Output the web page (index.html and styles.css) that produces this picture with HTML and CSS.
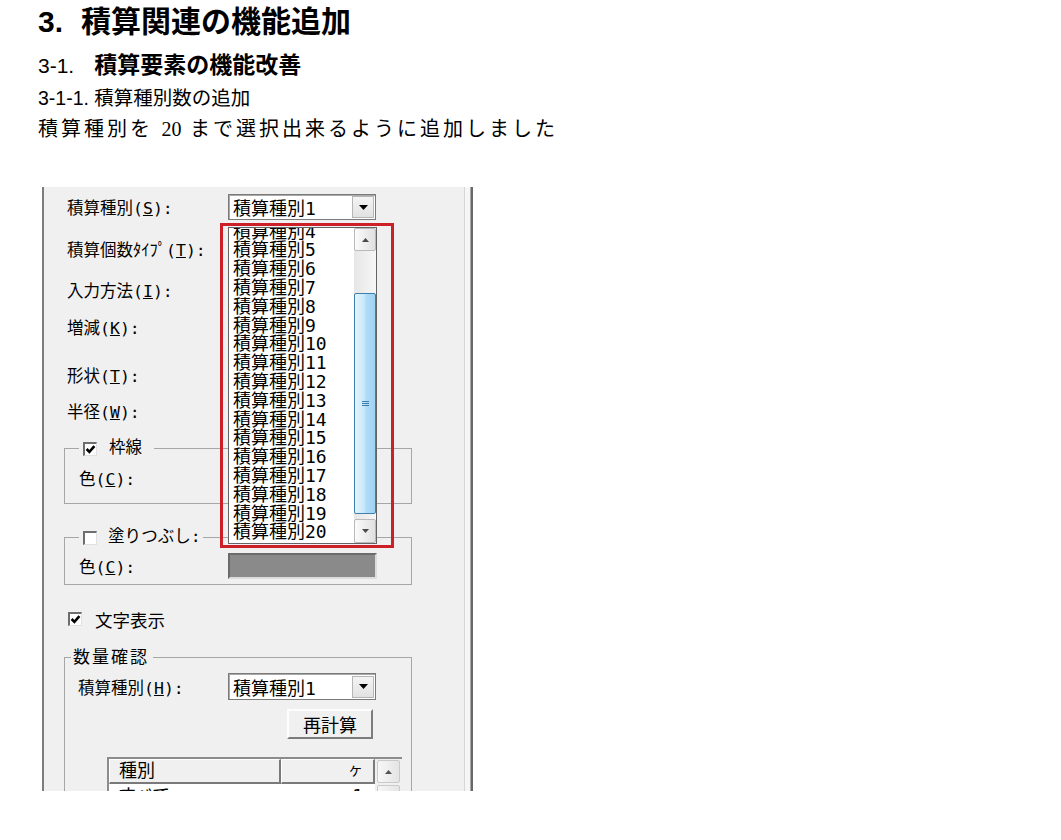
FILE: index.html
```html
<!DOCTYPE html>
<html lang="ja">
<head>
  <meta charset="UTF-8" />
  <title>3. 積算関連の機能追加</title>
  <link rel="stylesheet" href="styles.css">
</head>
<body>

  <div class="doc">
    <h1><span class="num">3.</span>積算関連の機能追加</h1>
    <h2><span class="num">3-1.</span>積算要素の機能改善</h2>
    <h3>3-1-1. 積算種別数の追加</h3>
    <p class="lead">積算種別を <span class="serif">20</span> まで選択出来るように追加しました</p>

    <!-- dialog screenshot -->
    <div class="shot">
      <div class="panel">
        <div class="row r1">
          <span class="lbl">積算種別(<u>S</u>):</span>
          <div class="combo">
            <span class="val">積算種別1</span>
            <i class="drop"><svg width="9" height="5" viewBox="0 0 9 5"><path d="M0 0h9L4.5 5z" fill="#000"/></svg></i>
          </div>
        </div>
        <div class="row r2"><span class="lbl">積算個数ﾀｲﾌﾟ(<u>T</u>):</span></div>
        <div class="row r3"><span class="lbl">入力方法(<u>I</u>):</span></div>
        <div class="row r4"><span class="lbl">増減(<u>K</u>):</span></div>
        <div class="row r5"><span class="lbl">形状(<u>T</u>):</span></div>
        <div class="row r6"><span class="lbl">半径(<u>W</u>):</span></div>

        <fieldset class="grp g1">
          <legend><i class="chk"><svg width="11" height="11" viewBox="0 0 11 11"><path d="M1.6 5l2.8 2.9L9.4 2.2" fill="none" stroke="#000" stroke-width="2.6"/></svg></i>枠線</legend>
          <div class="row"><span class="lbl">色(<u>C</u>):</span><div class="swatch"></div></div>
        </fieldset>

        <fieldset class="grp g2">
          <legend><i class="chk"></i>塗りつぶし:</legend>
          <div class="row"><span class="lbl">色(<u>C</u>):</span><div class="swatch"></div></div>
        </fieldset>

        <div class="row txtchk">
          <i class="chk"><svg width="11" height="11" viewBox="0 0 11 11"><path d="M1.6 5l2.8 2.9L9.4 2.2" fill="none" stroke="#000" stroke-width="2.6"/></svg></i>文字表示
        </div>

        <fieldset class="grp g3">
          <legend>数量確認</legend>
          <div class="row hrow">
            <span class="lbl">積算種別(<u>H</u>):</span>
            <div class="combo">
              <span class="val">積算種別1</span>
              <i class="drop"><svg width="9" height="5" viewBox="0 0 9 5"><path d="M0 0h9L4.5 5z" fill="#000"/></svg></i>
            </div>
          </div>
          <div class="btn">再計算</div>
          <div class="tbl">
            <div class="tbl-main">
              <div class="thead">
                <div class="th th1">種別</div>
                <div class="th th2">ヶ</div>
              </div>
              <div class="trow"><span class="td1">すべて</span><span class="td2">1</span></div>
            </div>
            <div class="tbl-sb">
              <i class="sbtn"><svg width="7" height="4" viewBox="0 0 7 4"><path d="M0 4h7L3.5 0z" fill="#555"/></svg></i>
              <i class="sbtn"></i>
            </div>
          </div>
        </fieldset>
      </div>
      <div class="edge"></div>

      <!-- open dropdown list -->
      <div class="dropdown">
        <div class="items">
          <div>積算種別4</div>
          <div>積算種別5</div>
          <div>積算種別6</div>
          <div>積算種別7</div>
          <div>積算種別8</div>
          <div>積算種別9</div>
          <div>積算種別10</div>
          <div>積算種別11</div>
          <div>積算種別12</div>
          <div>積算種別13</div>
          <div>積算種別14</div>
          <div>積算種別15</div>
          <div>積算種別16</div>
          <div>積算種別17</div>
          <div>積算種別18</div>
          <div>積算種別19</div>
          <div>積算種別20</div>
        </div>
        <div class="sb">
          <i class="arrow up"><svg width="7" height="4" viewBox="0 0 7 4"><path d="M0 4h7L3.5 0z" fill="#4a4a4a"/></svg></i>
          <div class="track">
            <div class="thumb"><svg width="7" height="6" viewBox="0 0 7 6"><path d="M0 .5h7M0 2.5h7M0 4.5h7" stroke="#3d7bad" stroke-width="1"/></svg></div>
          </div>
          <i class="arrow down"><svg width="7" height="4" viewBox="0 0 7 4"><path d="M0 0h7L3.5 4z" fill="#4a4a4a"/></svg></i>
        </div>
      </div>
      <div class="mark"></div>
    </div>
  </div>

</body>
</html>
```

FILE: styles.css
```css
* {
  box-sizing: border-box;
}

body {
  margin: 0;
  background: #fff;
  color: #000;
  font-family: "Liberation Sans", "Noto Sans CJK JP", sans-serif;
}

.doc {
  padding: 6px 0 0 38px;
}

h1 {
  margin: 0;
  font-size: 30px;
  line-height: 32px;
  font-weight: bold;
}

h1 .num {
  margin-right: 18px;
}

h2 {
  margin: 13px 0 0;
  font-size: 23px;
  line-height: 28px;
  font-weight: bold;
}

h2 .num {
  font-size: 21px;
  font-weight: normal;
  margin-right: 20px;
}

h3 {
  margin: 6px 0 0;
  font-size: 19.5px;
  line-height: 24px;
  font-weight: normal;
}

.lead {
  margin: 6px 0 0;
  font-size: 20px;
  line-height: 26px;
  letter-spacing: 3px;
}

.serif {
  font-family: "Liberation Serif", serif;
  letter-spacing: 0;
}

/* dialog */
.shot {
  position: relative;
  display: flex;
  width: 431px;
  height: 604px;
  margin: 45px 0 0 4px;
  border-left: 2px solid #7d7d7d;
  border-right: 2px solid #686868;
  overflow: hidden;
  font-family: "DejaVu Sans Mono", "Noto Sans CJK JP", monospace;
  font-size: 16.5px;
}

.panel {
  width: 421px;
  flex: none;
  background: #f0f0f0;
  border-right: 1px solid #d6d6d6;
  padding-left: 20px;
}

.edge {
  flex: 1;
  background: #f6f6f6;
  border-right: 1px solid #a8a8a8;
}

.row {
  display: flex;
  align-items: center;
  height: 26px;
  padding-left: 3px;
}

.r1 { margin-top: 7px; }
.r2 { margin-top: 16px; }
.r3 { margin-top: 15px; }
.r4 { margin-top: 11px; }
.r5 { margin-top: 22px; }
.r6 { margin-top: 10px; }

.lbl {
  flex: none;
}

.r1 .lbl {
  width: 161px;
}

.combo {
  display: flex;
  align-items: center;
  width: 148px;
  height: 26px;
  background: #fff;
  border: 1px solid #7a7a7a;
  box-shadow: inset 1px 1px 0 #a9a9a9;
  padding: 0 1px 0 4px;
  font-size: 18px;
}

.combo .val {
  flex: 1;
}

.drop {
  display: flex;
  align-items: center;
  justify-content: center;
  width: 22px;
  height: 22px;
  background: linear-gradient(#f4f4f4, #e2e2e2);
  border: 1px solid #b6b6b6;
}

.chk {
  display: inline-block;
  width: 14px;
  height: 14px;
  background: #fff;
  border-style: solid;
  border-width: 2px 1px 1px 2px;
  border-color: #6e6e6e #e0e0e0 #e0e0e0 #6e6e6e;
  vertical-align: middle;
}

.chk svg {
  display: block;
}

/* group boxes */
.grp {
  width: 348px;
  margin: 0;
  padding: 0;
  border: 1px solid #a6a6a6;
  min-inline-size: 0;
}

.grp legend {
  height: 18px;
  line-height: 18px;
  margin-left: 14px;
  font-size: 16.5px;
}

.grp .row {
  padding-left: 14px;
}

.grp .lbl {
  width: 149px;
}

.swatch {
  width: 149px;
  height: 26px;
  background: #8a8a8a;
  border: 2px solid;
  border-color: #6b6b6b #dcdcdc #dcdcdc #6b6b6b;
}

.g1 {
  margin-top: 15px;
  padding-bottom: 12px;
}

.g1 legend {
  padding: 0 12px 0 4px;
}

.g1 legend .chk {
  margin-right: 12px;
}

.g1 .row {
  margin-top: 8px;
}

.g2 {
  margin-top: 24px;
  padding-bottom: 5px;
}

.g2 legend {
  padding: 0 2px 0 4px;
}

.g2 legend .chk {
  margin-right: 11px;
}

.g2 .row {
  margin-top: 7px;
}

.txtchk {
  margin-top: 24px;
  height: 20px;
  padding-left: 4px;
  font-size: 17.5px;
}

.txtchk .chk {
  margin-right: 13px;
}

.g3 {
  margin-top: 19px;
  height: 200px;
}

.g3 legend {
  margin-left: 6px;
  padding: 0 4px 0 2px;
  font-size: 17px;
  letter-spacing: 2px;
}

.g3 .hrow {
  margin-top: 7px;
  height: 27px;
  padding-left: 13px;
}

.g3 .hrow .lbl {
  width: 150px;
}

.g3 .hrow .combo {
  height: 27px;
}

.btn {
  display: flex;
  align-items: center;
  justify-content: center;
  width: 86px;
  height: 30px;
  margin: 9px 0 0 222px;
  background: #f0f0f0;
  border: 2px solid;
  border-color: #fdfdfd #7c7c7c #7c7c7c #fdfdfd;
  font-size: 18px;
}

.tbl {
  display: flex;
  width: 295px;
  height: 60px;
  margin: 18px 0 0 42px;
  background: #fff;
  border-top: 2px solid #8c8c8c;
  border-left: 2px solid #8c8c8c;
}

.tbl-main {
  width: 266px;
}

.thead {
  display: flex;
  height: 25px;
}

.th {
  background: #f0f0f0;
  border-style: solid;
  border-width: 1px 2px 2px 1px;
  border-color: #fff #7a7a7a #7a7a7a #fff;
  font-size: 18px;
  line-height: 21px;
}

.th1 {
  width: 172px;
  padding-left: 9px;
}

.th2 {
  width: 94px;
  padding-right: 10px;
  text-align: right;
  font-size: 15px;
}

.trow {
  display: flex;
  font-size: 18px;
  line-height: 24px;
}

.td1 {
  width: 172px;
  padding-left: 9px;
}

.td2 {
  width: 94px;
  padding-right: 12px;
  text-align: right;
}

.tbl-sb {
  flex: 1;
  padding: 1px 2px;
  background: #f0f0f0;
}

.sbtn {
  display: flex;
  align-items: center;
  justify-content: center;
  height: 23px;
  margin-bottom: 2px;
  border: 1px solid #c9c9c9;
  border-radius: 2px;
  background: linear-gradient(to right, #f7f7f7, #e4e4e4);
}

/* open dropdown list */
.dropdown {
  position: absolute;
  left: 184px;
  top: 40px;
  width: 149px;
  height: 317px;
  display: flex;
  background: #fff;
  border: 1px solid #646464;
  font-size: 18px;
  z-index: 1;
}

.items {
  flex: 1;
  padding-left: 4px;
  overflow: hidden;
}

.items div {
  height: 18.8px;
  line-height: 18.8px;
  white-space: nowrap;
}

.items div:first-child {
  margin-top: -5.4px;
}

.sb {
  display: flex;
  flex-direction: column;
  width: 22px;
  background: linear-gradient(to right, #e6e6e6, #f6f6f6);
}

.arrow {
  display: flex;
  align-items: center;
  justify-content: center;
  border: 1px solid #b9b9b9;
  border-radius: 2px;
  background: linear-gradient(to right, #fbfbfb, #e0e0e0);
}

.arrow.up {
  height: 23px;
}

.arrow.down {
  height: 24px;
}

.track {
  flex: 1;
  padding: 42px 0 5px;
}

.thumb {
  display: flex;
  align-items: center;
  justify-content: center;
  height: 221px;
  border: 1px solid #3c7fb1;
  border-radius: 2px;
  background: linear-gradient(to right, #e4f3fd, #cbe9fb 45%, #b0dcf7 55%, #9fd2f2);
}

.mark {
  position: absolute;
  left: 176px;
  top: 36px;
  width: 174px;
  height: 325px;
  border: 3px solid #cd1f28;
  z-index: 2;
}
```
